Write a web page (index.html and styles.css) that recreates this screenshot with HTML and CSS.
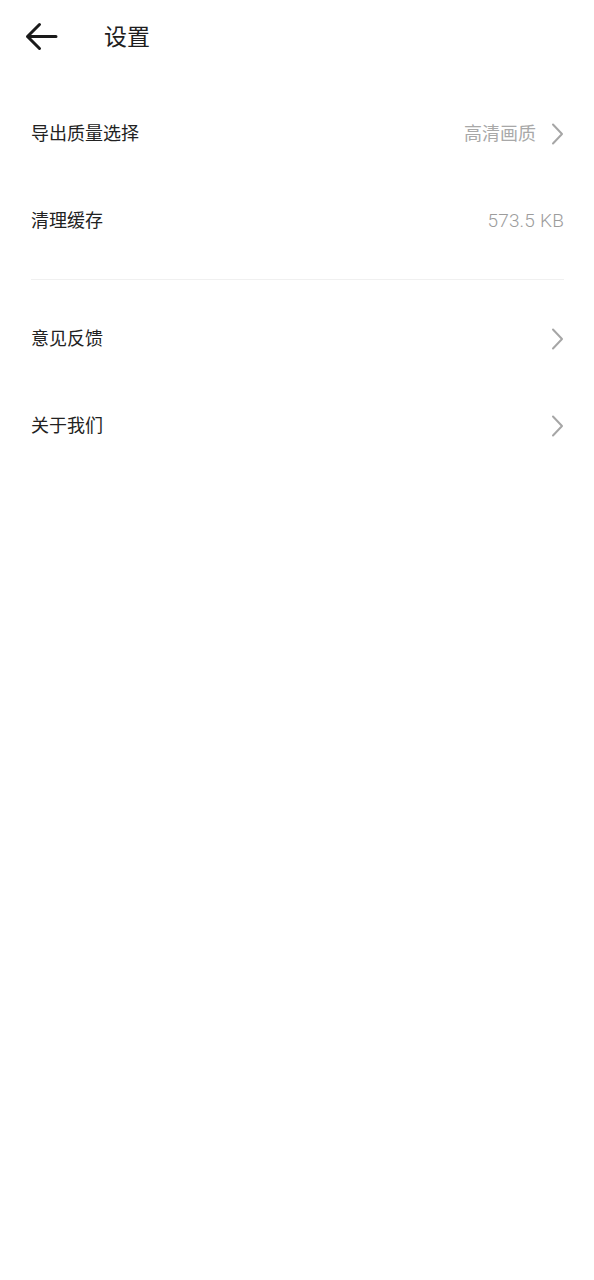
FILE: index.html
```html
<!DOCTYPE html>
<html lang="zh-CN">
<head>
<meta charset="utf-8">
<title>设置</title>
<link rel="stylesheet" href="styles.css">
</head>
<body>
<div class="page">
  <header class="header">
    <svg class="back" width="34" height="30" viewBox="0 0 34 30" aria-hidden="true">
      <path d="M32 14.5 H3.5 M15.5 2.5 L3.5 14.5 L15.5 26.5" fill="none" stroke="#1a1a1a" stroke-width="3" stroke-linecap="round" stroke-linejoin="round"/>
    </svg>
    <h1 class="title">设置</h1>
  </header>
  <main class="content">
    <div class="row">
      <span class="label">导出质量选择</span>
      <span class="right"><span class="value">高清画质</span><svg class="chev" width="13" height="22" viewBox="0 0 13 22" aria-hidden="true"><path d="M2 1.5 L11 11 L2 20.5" fill="none" stroke="#a6a6a6" stroke-width="2" stroke-linecap="round" stroke-linejoin="round"/></svg></span>
    </div>
    <div class="row">
      <span class="label">清理缓存</span>
      <span class="right"><span class="value num">573.5 KB</span></span>
    </div>
    <div class="divider"></div>
    <div class="row">
      <span class="label">意见反馈</span>
      <span class="right"><svg class="chev" width="13" height="22" viewBox="0 0 13 22" aria-hidden="true"><path d="M2 1.5 L11 11 L2 20.5" fill="none" stroke="#a6a6a6" stroke-width="2" stroke-linecap="round" stroke-linejoin="round"/></svg></span>
    </div>
    <div class="row">
      <span class="label">关于我们</span>
      <span class="right"><svg class="chev" width="13" height="22" viewBox="0 0 13 22" aria-hidden="true"><path d="M2 1.5 L11 11 L2 20.5" fill="none" stroke="#a6a6a6" stroke-width="2" stroke-linecap="round" stroke-linejoin="round"/></svg></span>
    </div>
  </main>
</div>
</body>
</html>
```

FILE: styles.css
```css
html, body {
  margin: 0;
  padding: 0;
  background: #ffffff;
}

body {
  font-family: Roboto, "Noto Sans CJK SC", sans-serif;
  color: #222222;
}

.page {
  width: 594px;
  min-height: 1280px;
}

.header {
  height: 76px;
  display: flex;
  align-items: center;
  padding-left: 24px;
  box-sizing: border-box;
}

.back {
  display: block;
  margin-top: -2px;
}

.title {
  margin: -1px 0 0 46px;
  font-size: 23px;
  font-weight: 400;
  color: #1e1e1e;
  line-height: 1;
}

.content {
  padding-top: 14px;
}

.row {
  height: 87px;
  display: flex;
  align-items: center;
  justify-content: space-between;
  padding: 0 30px 0 31px;
}

.label {
  font-size: 18px;
  color: #222222;
  line-height: 1;
}

.right {
  display: flex;
  align-items: center;
  gap: 15px;
}

.value {
  font-size: 18px;
  color: #a8a8a8;
  line-height: 1;
}

.value.num {
  font-size: 19px;
  font-weight: 300;
  color: #9c9c9c;
  letter-spacing: 0.2px;
}

.chev {
  display: block;
}

.divider {
  height: 1px;
  background: #f0f0f0;
  margin: 15px 30px 15px 31px;
}
```
